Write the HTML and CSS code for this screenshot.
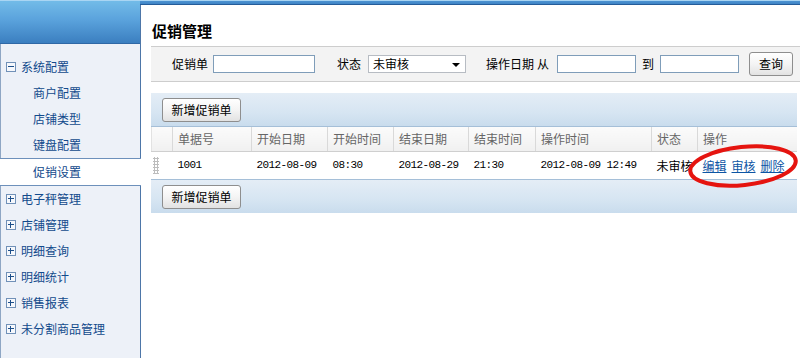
FILE: index.html
```html
<!DOCTYPE html>
<html lang="zh-CN">
<head>
<meta charset="utf-8">
<title>促销管理</title>
<link rel="stylesheet" href="styles.css">
</head>
<body>
<div class="app">
  <aside class="sidebar">
    <div class="side-head"></div>
    <ul class="menu">
      <li class="group"><span class="tog minus"></span>系统配置</li>
      <li class="sub">商户配置</li>
      <li class="sub">店铺类型</li>
      <li class="sub">键盘配置</li>
      <li class="sub active">促销设置</li>
      <li class="group"><span class="tog plus"></span>电子秤管理</li>
      <li class="group"><span class="tog plus"></span>店铺管理</li>
      <li class="group"><span class="tog plus"></span>明细查询</li>
      <li class="group"><span class="tog plus"></span>明细统计</li>
      <li class="group"><span class="tog plus"></span>销售报表</li>
      <li class="group"><span class="tog plus"></span>未分割商品管理</li>
    </ul>
  </aside>
  <main class="main">
    <div class="panel">
      <h1 class="title">促销管理</h1>
      <div class="filter">
        <span class="lbl l-first">促销单</span>
        <span class="input i-code"></span>
        <span class="lbl l-status">状态</span>
        <span class="select"><span class="sel-text">未审核</span><span class="caret"></span></span>
        <span class="lbl l-date">操作日期</span>
        <span class="lbl l-from">从</span>
        <span class="input i-date"></span>
        <span class="lbl l-to">到</span>
        <span class="input i-date i-date2"></span>
        <button class="btn btn-query">查询</button>
      </div>
      <div class="grid">
        <div class="toolbar"><button class="btn btn-add">新增促销单</button></div>
        <table class="table">
          <colgroup>
            <col class="c0"><col class="c1"><col class="c2"><col class="c3"><col class="c4"><col class="c5"><col class="c6"><col class="c7"><col class="c8">
          </colgroup>
          <thead>
            <tr>
              <th></th><th>单据号</th><th>开始日期</th><th>开始时间</th><th>结束日期</th><th>结束时间</th><th>操作时间</th><th>状态</th><th>操作</th>
            </tr>
          </thead>
          <tbody>
            <tr>
              <td class="grip-cell"><span class="grip"></span></td>
              <td class="num">1001</td>
              <td class="num">2012-08-09</td>
              <td class="num">08:30</td>
              <td class="num">2012-08-29</td>
              <td class="num">21:30</td>
              <td class="num">2012-08-09 12:49</td>
              <td>未审核</td>
              <td class="ops"><a href="#">编辑</a><a href="#">审核</a><a href="#">删除</a></td>
            </tr>
          </tbody>
        </table>
        <div class="toolbar bottom"><button class="btn btn-add">新增促销单</button></div>
      </div>
    </div>
  </main>
  <svg class="annot" width="800" height="358" viewBox="0 0 800 358" aria-hidden="true">
    <ellipse cx="743" cy="166" rx="53" ry="19" transform="rotate(-6 743 166)" fill="none" stroke="#e5140f" stroke-width="4"/>
  </svg>
</div>
</body>
</html>
```
FILE: styles.css
```css
* { box-sizing: border-box; }
html, body { margin: 0; padding: 0; }
body {
  font-family: "Noto Sans CJK SC", "Liberation Sans", sans-serif;
  font-size: 12px;
  color: #000;
  background: #fff;
}
.app {
  position: relative;
  display: flex;
  width: 800px;
  height: 358px;
  overflow: hidden;
}
/* sidebar */
.sidebar {
  width: 140px;
  flex: none;
  display: flex;
  flex-direction: column;
  position: relative;
  z-index: 2;
}
.side-head {
  height: 44px;
  background: linear-gradient(to bottom, #a9d5f3 0, #a9d5f3 1px, #72bbe8 1px, #5aa2dc 20px, #3b7fc0 43px);
  border-bottom: 1px solid #2f68a6;
}
.menu {
  flex: 1;
  list-style: none;
  margin: 0;
  padding: 10px 0 0;
  background: #edf1f8;
  border-left: 1px solid #8ea6c4;
}
.menu li {
  height: 26px;
  line-height: 26px;
  color: #124a8c;
  white-space: nowrap;
  display: flex;
  align-items: center;
}
.menu .group { padding-left: 5px; }
.menu .sub { padding-left: 32px; }
.menu .active {
  height: 28px;
  background: #fff;
  border-top: 1px solid #6d90bb;
  border-bottom: 1px solid #6d90bb;
  margin-right: -1px;
  margin-left: -1px;
  padding-left: 33px;
}
.tog {
  position: relative;
  width: 10px;
  height: 10px;
  margin-right: 5px;
  border: 1px solid #7191b8;
  background: #f6f8fc;
  flex: none;
}
.tog::before {
  content: "";
  position: absolute;
  left: 1px;
  top: 3px;
  width: 6px;
  height: 1px;
  background: #1d4f8a;
}
.plus::after {
  content: "";
  position: absolute;
  left: 3px;
  top: 1px;
  width: 1px;
  height: 6px;
  background: #1d4f8a;
}
/* main */
.main {
  flex: 1;
  padding-top: 5px;
  background: linear-gradient(to bottom, #a9d5f3 0, #a9d5f3 1px, #4c93d2 1px, #3f84c5 4px, #245c9a 4px, #245c9a 5px, #fff 5px);
}
.panel {
  height: 100%;
  background: #fff;
  border-left: 1px solid #4d76a8;
}
.title {
  margin: 0 0 0 11px;
  padding-top: 16px;
  height: 41px;
  font-size: 15px;
  line-height: 20px;
  font-weight: bold;
  color: #000;
}
.filter {
  margin: 0 0 0 10px;
  height: 36px;
  border-top: 1px solid #cdcdcd;
  border-bottom: 1px solid #cdcdcd;
  background: #f3f3f3;
  display: flex;
  align-items: center;
  padding-left: 21px;
}
.lbl { color: #000; white-space: nowrap; line-height: 18px; }
.input {
  height: 18px;
  border: 1px solid #7f9db9;
  background: #fff;
  margin-left: 5px;
}
.i-code { width: 102px; }
.l-status { margin-left: 22px; }
.select {
  position: relative;
  margin-left: 7px;
  width: 98px;
  height: 18px;
  border: 1px solid #b7bcc3;
  background: #fff;
  display: flex;
  align-items: center;
  padding-left: 4px;
}
.sel-text { line-height: 16px; }
.caret {
  position: absolute;
  right: 5px;
  top: 7px;
  width: 0;
  height: 0;
  border-left: 4px solid transparent;
  border-right: 4px solid transparent;
  border-top: 4px solid #000;
}
.l-date { margin-left: 20px; }
.l-from { margin-left: 3px; }
.i-date { width: 79px; margin-left: 8px; }
.l-to { margin-left: 6px; }
.i-date2 { margin-left: 6px; }
.btn {
  font-family: "Noto Sans CJK SC", "Liberation Sans", sans-serif;
  font-size: 12px;
  color: #000;
  height: 24px;
  padding: 0;
  border: 1px solid #8e8e8e;
  border-radius: 3px;
  background: linear-gradient(to bottom, #ffffff 0%, #f4f4f4 50%, #e2e2e2 100%);
  line-height: 22px;
}
.btn-query { width: 44px; margin-left: 10px; }
.btn-add { width: 79px; }
/* grid */
.grid {
  margin: 11px 4px 0 10px;
}
.toolbar {
  height: 34px;
  padding: 5px 0 0 11px;
  background: linear-gradient(to bottom, #e4edf6 0%, #d6e5f2 60%, #c9dced 100%);
  border-bottom: 1px solid #a5bfd8;
}
.toolbar.bottom {
  border-bottom: none;
  border-top: 1px solid #a5bfd8;
  height: 34px;
  padding-top: 5px;
}
.table {
  width: 645px;
  table-layout: fixed;
  border-collapse: collapse;
}
.c0 { width: 21px; }
.c1 { width: 79px; }
.c2 { width: 76px; }
.c3 { width: 66px; }
.c4 { width: 75px; }
.c5 { width: 67px; }
.c6 { width: 116px; }
.c7 { width: 46px; }
.c8 { width: 99px; }
.table th {
  height: 24px;
  padding: 0 0 0 5px;
  text-align: left;
  font-weight: normal;
  color: #666;
  background: linear-gradient(to bottom, #fbfbfb, #f0f0f0);
  border-right: 1px solid #d9d9d9;
  border-bottom: 1px solid #cfcfcf;
  white-space: nowrap;
}
.table th:first-child { border-left: 1px solid #e2e2e2; }
.table th:last-child { border-right: none; }
.table td {
  height: 28px;
  padding: 0 0 0 5px;
  white-space: nowrap;
  color: #000;
  background: #fff;
}
.table td.num {
  font-family: "Liberation Mono", "DejaVu Sans Mono", monospace;
  font-size: 11px;
  letter-spacing: -0.6px;
}
.grip-cell { padding: 0 0 0 1px !important; }
.grip {
  display: block;
  width: 6px;
  height: 17px;
  background-image: radial-gradient(circle, #bdbdbd 0, #bdbdbd 1px, transparent 1.2px);
  background-size: 3px 3px;
}
.ops a {
  color: #0c55a4;
  text-decoration: underline;
  margin-right: 5px;
}
.annot {
  position: absolute;
  left: 0;
  top: 0;
  pointer-events: none;
  z-index: 5;
}
```
